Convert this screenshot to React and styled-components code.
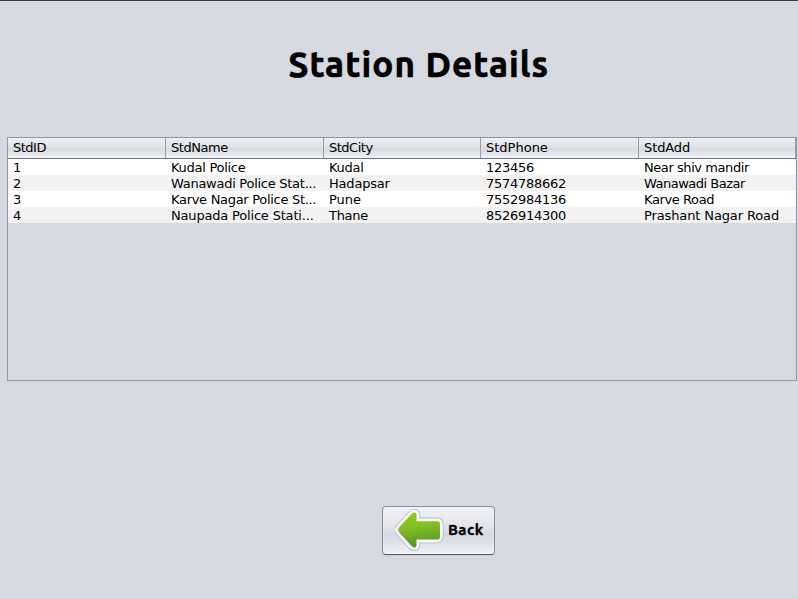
import React from "react";
import styled, { createGlobalStyle } from "styled-components";

const GlobalStyle = createGlobalStyle`
  * { box-sizing: border-box; }
  body { margin: 0; background: #d6d9df; overflow: hidden; }
`;

const Window = styled.main`
  width: 798px;
  height: 599px;
  display: flex;
  flex-direction: column;
  border-top: 1px solid #3c3b37;
  background: #d6d9df;
  color: #000;
  font: 13px/16px "DejaVu Sans", sans-serif;
`;

const Title = styled.h1`
  margin: 38px 0 0 288.5px;
  height: 50px;
  font: bold 35px/50px Ubuntu, "Noto Sans", sans-serif;
  letter-spacing: 1.1px;
  -webkit-text-stroke: 0.7px #000;
  white-space: nowrap;
`;

const TablePane = styled.section`
  margin: 48px 0 0 7px;
  width: 790px;
  height: 244px;
  border: 1px solid #9297a1;
`;

const Row = styled.div`
  display: grid;
  grid-template-columns: 158px 158px 157px 158px 157px;
  height: 16px;
  background: ${(p) => (p.$striped ? "#f2f2f2" : "#fff")};
`;

const HeaderRow = styled(Row)`
  height: 21px;
  border-bottom: 1px solid #70757f;
  background: linear-gradient(#eeeff2 0%, #dfe2e6 45%, #d6dadf 50%, #e0e4e9 75%, #f1f4f9 100%);
`;

const Cell = styled.div`
  padding: 1px 5px 0;
  line-height: 16px;
  letter-spacing: ${(p) => p.$tracking}px;
  white-space: nowrap;
  overflow: hidden;
`;

const HeaderCell = styled(Cell)`
  height: 20px;
  padding-top: 2px;
  border-right: 1px solid #969ba5;
`;

const BackButton = styled.button`
  margin: 125px 0 0 382px;
  width: 113px;
  height: 49px;
  padding: 0 0 0 12px;
  display: flex;
  align-items: center;
  gap: 4px;
  border: 1px solid #8d9099;
  border-bottom-color: #5b5e66;
  border-radius: 4px;
  background: linear-gradient(#f1f2f6 0%, #e0e2e7 45%, #d6d9df 57%, #dfe2e8 78%, #f0f2f8 100%);
  box-shadow: 0 1px 0 #c6c9cf;
  color: #000;
`;

const ButtonLabel = styled.span`
  padding-bottom: 2px;
  font: bold 15px/20px Ubuntu, "Noto Sans", sans-serif;
  letter-spacing: 0.4px;
  -webkit-text-stroke: 0.3px #000;
`;

/* Each entry is a text and its letter spacing in pixels. */
const columns = [
  ["StdID", -0.5],
  ["StdName", -0.45],
  ["StdCity", -0.5],
  ["StdPhone", 0],
  ["StdAdd", -0.1],
];

const stations = [
  [["1", 0], ["Kudal Police", -0.28], ["Kudal", -0.3], ["123456", -0.27], ["Near shiv mandir", -0.43]],
  [["2", 0], ["Wanawadi Police Stat...", -0.27], ["Hadapsar", -0.2], ["7574788662", -0.27], ["Wanawadi Bazar", -0.5]],
  [["3", 0], ["Karve Nagar Police St...", -0.3], ["Pune", 0], ["7552984136", -0.27], ["Karve Road", -0.4]],
  [["4", 0], ["Naupada Police Stati...", -0.18], ["Thane", -0.3], ["8526914300", -0.27], ["Prashant Nagar Road", -0.12]],
];

const arrow =
  "M4 18.6 16.5 5Q18 3.5 20 3.6Q21.5 4 21.5 6V12.2H42Q45 12.2 45 15V28Q45 30.6 42 30.6H21.5V36Q21.5 38 20 38.4Q18 38.6 16.5 37.1L4 23.2Q2 20.9 4 18.6Z";

function BackArrow() {
  return (
    <svg width="49" height="43" viewBox="0 0 49 43" aria-hidden="true">
      <defs>
        <linearGradient id="leaf" x1="0" y1="0" x2="0.15" y2="1">
          <stop offset="0" stopColor="#96cb1c" />
          <stop offset="0.5" stopColor="#80bd26" />
          <stop offset="1" stopColor="#5a9425" />
        </linearGradient>
      </defs>
      <path d={arrow} fill="none" stroke="#b5b7ba" strokeWidth="7.2" strokeLinejoin="round" />
      <path d={arrow} fill="none" stroke="#f7f7f8" strokeWidth="5.6" strokeLinejoin="round" />
      <path d={arrow} fill="url(#leaf)" />
    </svg>
  );
}

export default function App() {
  return (
    <Window>
      <GlobalStyle />
      <Title>Station Details</Title>
      <TablePane>
        <HeaderRow>
          {columns.map(([name, tracking]) => (
            <HeaderCell key={name} $tracking={tracking}>{name}</HeaderCell>
          ))}
        </HeaderRow>
        {stations.map((station, i) => (
          <Row key={i} $striped={i % 2 === 1}>
            {station.map(([value, tracking], c) => (
              <Cell key={c} $tracking={tracking}>{value}</Cell>
            ))}
          </Row>
        ))}
      </TablePane>
      <BackButton type="button">
        <BackArrow />
        <ButtonLabel>Back</ButtonLabel>
      </BackButton>
    </Window>
  );
}
